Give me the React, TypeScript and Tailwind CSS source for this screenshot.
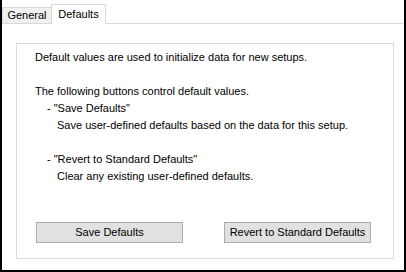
export default function App() {
  return (
    <div
      className="w-[406px] h-[272px] flex flex-col bg-white border-x-2 border-b-2 border-black text-[11px] text-black"
      style={{ fontFamily: '"Liberation Sans", Arial, sans-serif' }}
    >
      <div className="h-[23px] flex items-end">
        <div className="w-[49px] h-[16px] flex items-center justify-center bg-[#f0f0f0] border-l border-t border-[#d9d9d9]">
          General
        </div>
        <div className="relative z-10 -mb-px w-[55px] h-[20px] flex items-center justify-center bg-white border-x border-t border-[#d9d9d9]">
          Defaults
        </div>
      </div>

      <div className="flex-1 flex border-t border-[#d9d9d9] pt-[19px] pl-[14px] pr-[10px] pb-[11px]">
        <div className="flex-1 flex flex-col border border-[#dcdcdc]">
          <div className="pt-[5px] pl-[18px] leading-[17px]">
            <p>Default values are used to initialize data for new setups.</p>
            <p className="h-[17px]" />
            <p>The following buttons control default values.</p>
            <p className="pl-[12px]">- "Save Defaults"</p>
            <p className="pl-[22px]">Save user-defined defaults based on the data for this setup.</p>
            <p className="h-[17px]" />
            <p className="pl-[12px]">- "Revert to Standard Defaults"</p>
            <p className="pl-[22px]">Clear any existing user-defined defaults.</p>
          </div>

          <div className="mt-auto flex gap-[41px] pl-[19px] pb-[15px]">
            <button className="w-[147px] h-[21px] bg-[#e1e1e1] border border-[#adadad]">
              Save Defaults
            </button>
            <button className="w-[147px] h-[21px] bg-[#e1e1e1] border border-[#adadad]">
              Revert to Standard Defaults
            </button>
          </div>
        </div>
      </div>
    </div>
  );
}
